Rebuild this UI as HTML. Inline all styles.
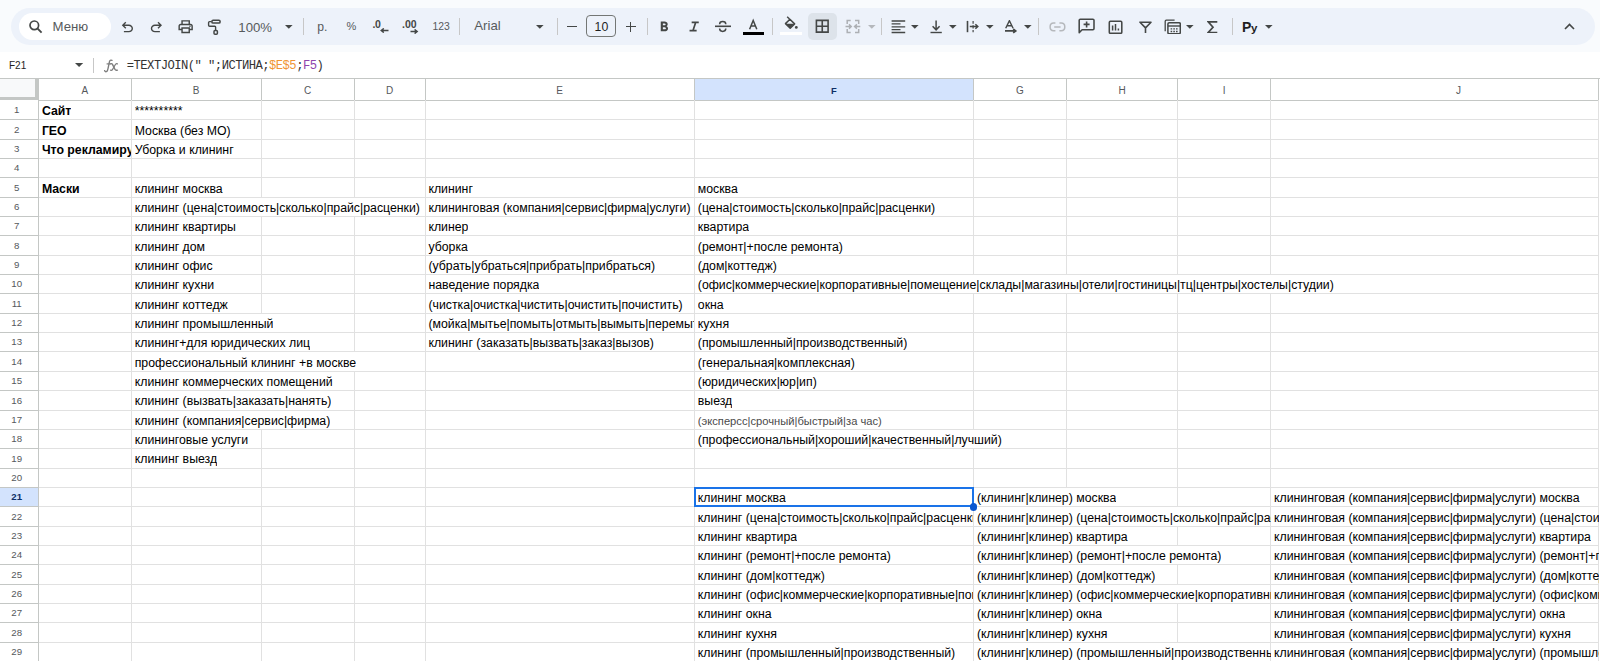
<!DOCTYPE html><html><head><meta charset="utf-8"><style>
*{margin:0;padding:0;box-sizing:border-box}
html,body{width:1600px;height:661px;overflow:hidden;background:#f9fbfd;font-family:"Liberation Sans", sans-serif;position:relative}
.a{position:absolute}
.t{position:absolute;white-space:nowrap;overflow:hidden;color:#000;font-size:12.3px;line-height:15px;height:15px}
.ic{position:absolute;fill:none;stroke:#444746;stroke-width:1.6}
.tri{position:absolute;width:0;height:0;border-left:3.9px solid transparent;border-right:3.9px solid transparent;border-top:3.9px solid #444746}
.sep{position:absolute;width:1px;top:17.5px;height:17.5px;background:#c7c7c7}
</style></head><body>

<div class="a" style="left:0;top:52px;width:1600px;height:609px;background:#fff"></div>
<div class="a" style="left:694.4px;top:78.4px;width:279.1px;height:22.0px;background:#d3e3fd"></div>
<div class="a" style="left:0;top:487.4px;width:38.5px;height:19.35px;background:#d3e3fd"></div>
<div class="a" style="left:0;top:78.4px;width:35px;height:19px;background:#f8f9fa"></div>
<div class="a" style="left:35px;top:78.4px;width:3.5px;height:22.0px;background:#c4c7c5"></div>
<div class="a" style="left:0;top:97px;width:38.5px;height:3.4px;background:#c4c7c5"></div>
<div class="a" style="left:0;top:77.9px;width:1600px;height:1px;background:#c4c7c5"></div>
<div class="a" style="left:38.5px;top:99.9px;width:1560.25px;height:1px;background:#c4c7c5"></div>
<div class="a" style="left:38.5px;top:119.25px;width:1560.25px;height:1px;background:#e1e1e1"></div>
<div class="a" style="left:0;top:119.25px;width:38.5px;height:1px;background:#c4c7c5"></div>
<div class="a" style="left:38.5px;top:138.60000000000002px;width:1560.25px;height:1px;background:#e1e1e1"></div>
<div class="a" style="left:0;top:138.60000000000002px;width:38.5px;height:1px;background:#c4c7c5"></div>
<div class="a" style="left:38.5px;top:157.95000000000002px;width:1560.25px;height:1px;background:#e1e1e1"></div>
<div class="a" style="left:0;top:157.95000000000002px;width:38.5px;height:1px;background:#c4c7c5"></div>
<div class="a" style="left:38.5px;top:177.3px;width:1560.25px;height:1px;background:#e1e1e1"></div>
<div class="a" style="left:0;top:177.3px;width:38.5px;height:1px;background:#c4c7c5"></div>
<div class="a" style="left:38.5px;top:196.65px;width:1560.25px;height:1px;background:#e1e1e1"></div>
<div class="a" style="left:0;top:196.65px;width:38.5px;height:1px;background:#c4c7c5"></div>
<div class="a" style="left:38.5px;top:216.0px;width:1560.25px;height:1px;background:#e1e1e1"></div>
<div class="a" style="left:0;top:216.0px;width:38.5px;height:1px;background:#c4c7c5"></div>
<div class="a" style="left:38.5px;top:235.35000000000002px;width:1560.25px;height:1px;background:#e1e1e1"></div>
<div class="a" style="left:0;top:235.35000000000002px;width:38.5px;height:1px;background:#c4c7c5"></div>
<div class="a" style="left:38.5px;top:254.70000000000002px;width:1560.25px;height:1px;background:#e1e1e1"></div>
<div class="a" style="left:0;top:254.70000000000002px;width:38.5px;height:1px;background:#c4c7c5"></div>
<div class="a" style="left:38.5px;top:274.05px;width:1560.25px;height:1px;background:#e1e1e1"></div>
<div class="a" style="left:0;top:274.05px;width:38.5px;height:1px;background:#c4c7c5"></div>
<div class="a" style="left:38.5px;top:293.4px;width:1560.25px;height:1px;background:#e1e1e1"></div>
<div class="a" style="left:0;top:293.4px;width:38.5px;height:1px;background:#c4c7c5"></div>
<div class="a" style="left:38.5px;top:312.75px;width:1560.25px;height:1px;background:#e1e1e1"></div>
<div class="a" style="left:0;top:312.75px;width:38.5px;height:1px;background:#c4c7c5"></div>
<div class="a" style="left:38.5px;top:332.1px;width:1560.25px;height:1px;background:#e1e1e1"></div>
<div class="a" style="left:0;top:332.1px;width:38.5px;height:1px;background:#c4c7c5"></div>
<div class="a" style="left:38.5px;top:351.45000000000005px;width:1560.25px;height:1px;background:#e1e1e1"></div>
<div class="a" style="left:0;top:351.45000000000005px;width:38.5px;height:1px;background:#c4c7c5"></div>
<div class="a" style="left:38.5px;top:370.80000000000007px;width:1560.25px;height:1px;background:#e1e1e1"></div>
<div class="a" style="left:0;top:370.80000000000007px;width:38.5px;height:1px;background:#c4c7c5"></div>
<div class="a" style="left:38.5px;top:390.15px;width:1560.25px;height:1px;background:#e1e1e1"></div>
<div class="a" style="left:0;top:390.15px;width:38.5px;height:1px;background:#c4c7c5"></div>
<div class="a" style="left:38.5px;top:409.5px;width:1560.25px;height:1px;background:#e1e1e1"></div>
<div class="a" style="left:0;top:409.5px;width:38.5px;height:1px;background:#c4c7c5"></div>
<div class="a" style="left:38.5px;top:428.85px;width:1560.25px;height:1px;background:#e1e1e1"></div>
<div class="a" style="left:0;top:428.85px;width:38.5px;height:1px;background:#c4c7c5"></div>
<div class="a" style="left:38.5px;top:448.20000000000005px;width:1560.25px;height:1px;background:#e1e1e1"></div>
<div class="a" style="left:0;top:448.20000000000005px;width:38.5px;height:1px;background:#c4c7c5"></div>
<div class="a" style="left:38.5px;top:467.55000000000007px;width:1560.25px;height:1px;background:#e1e1e1"></div>
<div class="a" style="left:0;top:467.55000000000007px;width:38.5px;height:1px;background:#c4c7c5"></div>
<div class="a" style="left:38.5px;top:486.9px;width:1560.25px;height:1px;background:#e1e1e1"></div>
<div class="a" style="left:0;top:486.9px;width:38.5px;height:1px;background:#c4c7c5"></div>
<div class="a" style="left:38.5px;top:506.25px;width:1560.25px;height:1px;background:#e1e1e1"></div>
<div class="a" style="left:0;top:506.25px;width:38.5px;height:1px;background:#c4c7c5"></div>
<div class="a" style="left:38.5px;top:525.6px;width:1560.25px;height:1px;background:#e1e1e1"></div>
<div class="a" style="left:0;top:525.6px;width:38.5px;height:1px;background:#c4c7c5"></div>
<div class="a" style="left:38.5px;top:544.95px;width:1560.25px;height:1px;background:#e1e1e1"></div>
<div class="a" style="left:0;top:544.95px;width:38.5px;height:1px;background:#c4c7c5"></div>
<div class="a" style="left:38.5px;top:564.3000000000001px;width:1560.25px;height:1px;background:#e1e1e1"></div>
<div class="a" style="left:0;top:564.3000000000001px;width:38.5px;height:1px;background:#c4c7c5"></div>
<div class="a" style="left:38.5px;top:583.6500000000001px;width:1560.25px;height:1px;background:#e1e1e1"></div>
<div class="a" style="left:0;top:583.6500000000001px;width:38.5px;height:1px;background:#c4c7c5"></div>
<div class="a" style="left:38.5px;top:603.0px;width:1560.25px;height:1px;background:#e1e1e1"></div>
<div class="a" style="left:0;top:603.0px;width:38.5px;height:1px;background:#c4c7c5"></div>
<div class="a" style="left:38.5px;top:622.35px;width:1560.25px;height:1px;background:#e1e1e1"></div>
<div class="a" style="left:0;top:622.35px;width:38.5px;height:1px;background:#c4c7c5"></div>
<div class="a" style="left:38.5px;top:641.7px;width:1560.25px;height:1px;background:#e1e1e1"></div>
<div class="a" style="left:0;top:641.7px;width:38.5px;height:1px;background:#c4c7c5"></div>
<div class="a" style="left:38.5px;top:661.0500000000001px;width:1560.25px;height:1px;background:#e1e1e1"></div>
<div class="a" style="left:0;top:661.0500000000001px;width:38.5px;height:1px;background:#c4c7c5"></div>
<div class="a" style="left:38.0px;top:100.4px;width:1px;height:561.1500000000001px;background:#c4c7c5"></div>
<div class="a" style="left:130.8px;top:78.4px;width:1px;height:22.0px;background:#c4c7c5"></div>
<div class="a" style="left:130.8px;top:100.4px;width:1px;height:561.1500000000001px;background:#e1e1e1"></div>
<div class="a" style="left:260.5px;top:78.4px;width:1px;height:22.0px;background:#c4c7c5"></div>
<div class="a" style="left:260.5px;top:100.4px;width:1px;height:96.75px;background:#e1e1e1"></div>
<div class="a" style="left:260.5px;top:216.5px;width:1px;height:96.75px;background:#e1e1e1"></div>
<div class="a" style="left:260.5px;top:429.35px;width:1px;height:232.20000000000005px;background:#e1e1e1"></div>
<div class="a" style="left:353.9px;top:78.4px;width:1px;height:22.0px;background:#c4c7c5"></div>
<div class="a" style="left:353.9px;top:100.4px;width:1px;height:96.75px;background:#e1e1e1"></div>
<div class="a" style="left:353.9px;top:216.5px;width:1px;height:135.45000000000005px;background:#e1e1e1"></div>
<div class="a" style="left:353.9px;top:371.30000000000007px;width:1px;height:290.25px;background:#e1e1e1"></div>
<div class="a" style="left:424.5px;top:78.4px;width:1px;height:22.0px;background:#c4c7c5"></div>
<div class="a" style="left:424.5px;top:100.4px;width:1px;height:561.1500000000001px;background:#e1e1e1"></div>
<div class="a" style="left:693.9px;top:78.4px;width:1px;height:22.0px;background:#c4c7c5"></div>
<div class="a" style="left:693.9px;top:100.4px;width:1px;height:561.1500000000001px;background:#e1e1e1"></div>
<div class="a" style="left:973.0px;top:78.4px;width:1px;height:22.0px;background:#c4c7c5"></div>
<div class="a" style="left:973.0px;top:100.4px;width:1px;height:174.15px;background:#e1e1e1"></div>
<div class="a" style="left:973.0px;top:293.9px;width:1px;height:135.45000000000005px;background:#e1e1e1"></div>
<div class="a" style="left:973.0px;top:448.70000000000005px;width:1px;height:212.85000000000002px;background:#e1e1e1"></div>
<div class="a" style="left:1066.0px;top:78.4px;width:1px;height:22.0px;background:#c4c7c5"></div>
<div class="a" style="left:1066.0px;top:100.4px;width:1px;height:174.15px;background:#e1e1e1"></div>
<div class="a" style="left:1066.0px;top:293.9px;width:1px;height:193.5px;background:#e1e1e1"></div>
<div class="a" style="left:1177.0px;top:78.4px;width:1px;height:22.0px;background:#c4c7c5"></div>
<div class="a" style="left:1177.0px;top:100.4px;width:1px;height:174.15px;background:#e1e1e1"></div>
<div class="a" style="left:1177.0px;top:293.9px;width:1px;height:212.85000000000002px;background:#e1e1e1"></div>
<div class="a" style="left:1177.0px;top:526.1px;width:1px;height:19.350000000000023px;background:#e1e1e1"></div>
<div class="a" style="left:1177.0px;top:564.8000000000001px;width:1px;height:19.350000000000023px;background:#e1e1e1"></div>
<div class="a" style="left:1177.0px;top:603.5px;width:1px;height:38.700000000000045px;background:#e1e1e1"></div>
<div class="a" style="left:1270.1px;top:78.4px;width:1px;height:22.0px;background:#c4c7c5"></div>
<div class="a" style="left:1270.1px;top:100.4px;width:1px;height:174.15px;background:#e1e1e1"></div>
<div class="a" style="left:1270.1px;top:293.9px;width:1px;height:367.6500000000001px;background:#e1e1e1"></div>
<div class="a" style="left:1598.25px;top:78.4px;width:1px;height:22.0px;background:#c4c7c5"></div>
<div class="a" style="left:1598.25px;top:100.4px;width:1px;height:561.1500000000001px;background:#e1e1e1"></div>
<div class="a" style="left:64.9px;top:83.80000000000001px;width:40px;text-align:center;font-size:10px;line-height:14px;color:#55585c;font-weight:normal">A</div>
<div class="a" style="left:176.15px;top:83.80000000000001px;width:40px;text-align:center;font-size:10px;line-height:14px;color:#55585c;font-weight:normal">B</div>
<div class="a" style="left:287.7px;top:83.80000000000001px;width:40px;text-align:center;font-size:10px;line-height:14px;color:#55585c;font-weight:normal">C</div>
<div class="a" style="left:369.7px;top:83.80000000000001px;width:40px;text-align:center;font-size:10px;line-height:14px;color:#55585c;font-weight:normal">D</div>
<div class="a" style="left:539.7px;top:83.80000000000001px;width:40px;text-align:center;font-size:10px;line-height:14px;color:#55585c;font-weight:normal">E</div>
<div class="a" style="left:813.95px;top:84.30000000000001px;width:40px;text-align:center;font-size:9.4px;line-height:14px;color:#0e2e66;font-weight:bold">F</div>
<div class="a" style="left:1000.0px;top:83.80000000000001px;width:40px;text-align:center;font-size:10px;line-height:14px;color:#55585c;font-weight:normal">G</div>
<div class="a" style="left:1102.0px;top:83.80000000000001px;width:40px;text-align:center;font-size:10px;line-height:14px;color:#55585c;font-weight:normal">H</div>
<div class="a" style="left:1204.05px;top:83.80000000000001px;width:40px;text-align:center;font-size:10px;line-height:14px;color:#55585c;font-weight:normal">I</div>
<div class="a" style="left:1438.5px;top:83.80000000000001px;width:40px;text-align:center;font-size:10px;line-height:14px;color:#55585c;font-weight:normal">J</div>
<div class="a" style="left:-2.6px;top:103.275px;width:38.5px;text-align:center;font-size:9.7px;line-height:14px;color:#55585c;font-weight:normal">1</div>
<div class="a" style="left:-2.6px;top:122.62500000000001px;width:38.5px;text-align:center;font-size:9.7px;line-height:14px;color:#55585c;font-weight:normal">2</div>
<div class="a" style="left:-2.6px;top:141.97500000000002px;width:38.5px;text-align:center;font-size:9.7px;line-height:14px;color:#55585c;font-weight:normal">3</div>
<div class="a" style="left:-2.6px;top:161.325px;width:38.5px;text-align:center;font-size:9.7px;line-height:14px;color:#55585c;font-weight:normal">4</div>
<div class="a" style="left:-2.6px;top:180.675px;width:38.5px;text-align:center;font-size:9.7px;line-height:14px;color:#55585c;font-weight:normal">5</div>
<div class="a" style="left:-2.6px;top:200.02499999999998px;width:38.5px;text-align:center;font-size:9.7px;line-height:14px;color:#55585c;font-weight:normal">6</div>
<div class="a" style="left:-2.6px;top:219.375px;width:38.5px;text-align:center;font-size:9.7px;line-height:14px;color:#55585c;font-weight:normal">7</div>
<div class="a" style="left:-2.6px;top:238.72500000000002px;width:38.5px;text-align:center;font-size:9.7px;line-height:14px;color:#55585c;font-weight:normal">8</div>
<div class="a" style="left:-2.6px;top:258.075px;width:38.5px;text-align:center;font-size:9.7px;line-height:14px;color:#55585c;font-weight:normal">9</div>
<div class="a" style="left:-2.6px;top:277.425px;width:38.5px;text-align:center;font-size:9.7px;line-height:14px;color:#55585c;font-weight:normal">10</div>
<div class="a" style="left:-2.6px;top:296.775px;width:38.5px;text-align:center;font-size:9.7px;line-height:14px;color:#55585c;font-weight:normal">11</div>
<div class="a" style="left:-2.6px;top:316.125px;width:38.5px;text-align:center;font-size:9.7px;line-height:14px;color:#55585c;font-weight:normal">12</div>
<div class="a" style="left:-2.6px;top:335.475px;width:38.5px;text-align:center;font-size:9.7px;line-height:14px;color:#55585c;font-weight:normal">13</div>
<div class="a" style="left:-2.6px;top:354.82500000000005px;width:38.5px;text-align:center;font-size:9.7px;line-height:14px;color:#55585c;font-weight:normal">14</div>
<div class="a" style="left:-2.6px;top:374.175px;width:38.5px;text-align:center;font-size:9.7px;line-height:14px;color:#55585c;font-weight:normal">15</div>
<div class="a" style="left:-2.6px;top:393.525px;width:38.5px;text-align:center;font-size:9.7px;line-height:14px;color:#55585c;font-weight:normal">16</div>
<div class="a" style="left:-2.6px;top:412.875px;width:38.5px;text-align:center;font-size:9.7px;line-height:14px;color:#55585c;font-weight:normal">17</div>
<div class="a" style="left:-2.6px;top:432.225px;width:38.5px;text-align:center;font-size:9.7px;line-height:14px;color:#55585c;font-weight:normal">18</div>
<div class="a" style="left:-2.6px;top:451.57500000000005px;width:38.5px;text-align:center;font-size:9.7px;line-height:14px;color:#55585c;font-weight:normal">19</div>
<div class="a" style="left:-2.6px;top:470.925px;width:38.5px;text-align:center;font-size:9.7px;line-height:14px;color:#55585c;font-weight:normal">20</div>
<div class="a" style="left:-2.6px;top:490.275px;width:38.5px;text-align:center;font-size:9.7px;line-height:14px;color:#0e2e66;font-weight:bold">21</div>
<div class="a" style="left:-2.6px;top:509.62499999999994px;width:38.5px;text-align:center;font-size:9.7px;line-height:14px;color:#55585c;font-weight:normal">22</div>
<div class="a" style="left:-2.6px;top:528.9750000000001px;width:38.5px;text-align:center;font-size:9.7px;line-height:14px;color:#55585c;font-weight:normal">23</div>
<div class="a" style="left:-2.6px;top:548.325px;width:38.5px;text-align:center;font-size:9.7px;line-height:14px;color:#55585c;font-weight:normal">24</div>
<div class="a" style="left:-2.6px;top:567.6750000000002px;width:38.5px;text-align:center;font-size:9.7px;line-height:14px;color:#55585c;font-weight:normal">25</div>
<div class="a" style="left:-2.6px;top:587.0250000000001px;width:38.5px;text-align:center;font-size:9.7px;line-height:14px;color:#55585c;font-weight:normal">26</div>
<div class="a" style="left:-2.6px;top:606.375px;width:38.5px;text-align:center;font-size:9.7px;line-height:14px;color:#55585c;font-weight:normal">27</div>
<div class="a" style="left:-2.6px;top:625.7250000000001px;width:38.5px;text-align:center;font-size:9.7px;line-height:14px;color:#55585c;font-weight:normal">28</div>
<div class="a" style="left:-2.6px;top:645.075px;width:38.5px;text-align:center;font-size:9.7px;line-height:14px;color:#55585c;font-weight:normal">29</div>
<div class="t" style="left:41.90px;top:104.15px;width:29.45px;font-weight:bold;">Сайт</div>
<div class="t" style="left:134.70px;top:104.15px;width:47.86px;">**********</div>
<div class="t" style="left:41.90px;top:123.50px;width:24.75px;font-weight:bold;">ГЕО</div>
<div class="t" style="left:134.70px;top:123.50px;width:95.94px;">Москва (без МО)</div>
<div class="t" style="left:41.90px;top:142.85px;width:89.40px;font-weight:bold;">Что рекламируем</div>
<div class="t" style="left:134.70px;top:142.85px;width:98.95px;">Уборка и клининг</div>
<div class="t" style="left:41.90px;top:181.55px;width:37.80px;font-weight:bold;">Маски</div>
<div class="t" style="left:134.70px;top:181.55px;width:87.98px;">клининг москва</div>
<div class="t" style="left:428.40px;top:181.55px;width:44.50px;">клининг</div>
<div class="t" style="left:697.80px;top:181.55px;width:40.06px;">москва</div>
<div class="t" style="left:134.70px;top:200.90px;width:285.23px;">клининг (цена|стоимость|сколько|прайс|расценки)</div>
<div class="t" style="left:428.40px;top:200.90px;width:262.11px;">клининговая (компания|сервис|фирма|услуги)</div>
<div class="t" style="left:697.80px;top:200.90px;width:237.31px;">(цена|стоимость|сколько|прайс|расценки)</div>
<div class="t" style="left:134.70px;top:220.25px;width:101.28px;">клининг квартиры</div>
<div class="t" style="left:428.40px;top:220.25px;width:40.03px;">клинер</div>
<div class="t" style="left:697.80px;top:220.25px;width:51.38px;">квартира</div>
<div class="t" style="left:134.70px;top:239.60px;width:70.39px;">клининг дом</div>
<div class="t" style="left:428.40px;top:239.60px;width:39.50px;">уборка</div>
<div class="t" style="left:697.80px;top:239.60px;width:145.14px;">(ремонт|+после ремонта)</div>
<div class="t" style="left:134.70px;top:258.95px;width:77.89px;">клининг офис</div>
<div class="t" style="left:428.40px;top:258.95px;width:226.66px;">(убрать|убраться|прибрать|прибраться)</div>
<div class="t" style="left:697.80px;top:258.95px;width:79.05px;">(дом|коттедж)</div>
<div class="t" style="left:134.70px;top:278.30px;width:79.39px;">клининг кухни</div>
<div class="t" style="left:428.40px;top:278.30px;width:111.05px;">наведение порядка</div>
<div class="t" style="left:697.80px;top:278.30px;width:636.02px;">(офис|коммерческие|корпоративные|помещение|склады|магазины|отели|гостиницы|тц|центры|хостелы|студии)</div>
<div class="t" style="left:134.70px;top:297.65px;width:93.11px;">клининг коттедж</div>
<div class="t" style="left:428.40px;top:297.65px;width:254.33px;">(чистка|очистка|чистить|очистить|почистить)</div>
<div class="t" style="left:697.80px;top:297.65px;width:25.86px;">окна</div>
<div class="t" style="left:134.70px;top:317.00px;width:138.72px;">клининг промышленный</div>
<div class="t" style="left:428.40px;top:317.00px;width:266.00px;">(мойка|мытье|помыть|отмыть|вымыть|перемыть)</div>
<div class="t" style="left:697.80px;top:317.00px;width:31.27px;">кухня</div>
<div class="t" style="left:134.70px;top:336.35px;width:175.38px;">клининг+для юридических лиц</div>
<div class="t" style="left:428.40px;top:336.35px;width:225.48px;">клининг (заказать|вызвать|заказ|вызов)</div>
<div class="t" style="left:697.80px;top:336.35px;width:209.47px;">(промышленный|производственный)</div>
<div class="t" style="left:134.70px;top:355.70px;width:221.53px;">профессиональный клининг +в москве</div>
<div class="t" style="left:697.80px;top:355.70px;width:157.06px;">(генеральная|комплексная)</div>
<div class="t" style="left:134.70px;top:375.05px;width:197.94px;">клининг коммерческих помещений</div>
<div class="t" style="left:697.80px;top:375.05px;width:118.94px;">(юридических|юр|ип)</div>
<div class="t" style="left:134.70px;top:394.40px;width:196.70px;">клининг (вызвать|заказать|нанять)</div>
<div class="t" style="left:697.80px;top:394.40px;width:34.48px;">выезд</div>
<div class="t" style="left:134.70px;top:413.75px;width:195.63px;">клининг (компания|сервис|фирма)</div>
<div class="t" style="left:697.80px;top:413.75px;width:184.06px;font-size:11.2px;color:#4a4a4a;">(эксперсс|срочный|быстрый|за час)</div>
<div class="t" style="left:134.70px;top:433.10px;width:113.53px;">клининговые услуги</div>
<div class="t" style="left:697.80px;top:433.10px;width:304.02px;">(профессиональный|хороший|качественный|лучший)</div>
<div class="t" style="left:134.70px;top:452.45px;width:82.41px;">клининг выезд</div>
<div class="t" style="left:697.80px;top:491.15px;width:87.98px;">клининг москва</div>
<div class="t" style="left:976.90px;top:491.15px;width:139.39px;">(клининг|клинер) москва</div>
<div class="t" style="left:1274.00px;top:491.15px;width:305.59px;">клининговая (компания|сервис|фирма|услуги) москва</div>
<div class="t" style="left:697.80px;top:510.50px;width:275.70px;">клининг (цена|стоимость|сколько|прайс|расценки)</div>
<div class="t" style="left:976.90px;top:510.50px;width:293.70px;">(клининг|клинер) (цена|стоимость|сколько|прайс|расценки)</div>
<div class="t" style="left:1274.00px;top:510.50px;width:324.75px;">клининговая (компания|сервис|фирма|услуги) (цена|стоимость|сколько|прайс|расценки)</div>
<div class="t" style="left:697.80px;top:529.85px;width:99.28px;">клининг квартира</div>
<div class="t" style="left:976.90px;top:529.85px;width:150.70px;">(клининг|клинер) квартира</div>
<div class="t" style="left:1274.00px;top:529.85px;width:316.89px;">клининговая (компания|сервис|фирма|услуги) квартира</div>
<div class="t" style="left:697.80px;top:549.20px;width:193.05px;">клининг (ремонт|+после ремонта)</div>
<div class="t" style="left:976.90px;top:549.20px;width:244.47px;">(клининг|клинер) (ремонт|+после ремонта)</div>
<div class="t" style="left:1274.00px;top:549.20px;width:324.75px;">клининговая (компания|сервис|фирма|услуги) (ремонт|+после ремонта)</div>
<div class="t" style="left:697.80px;top:568.55px;width:126.95px;">клининг (дом|коттедж)</div>
<div class="t" style="left:976.90px;top:568.55px;width:178.38px;">(клининг|клинер) (дом|коттедж)</div>
<div class="t" style="left:1274.00px;top:568.55px;width:324.75px;">клининговая (компания|сервис|фирма|услуги) (дом|коттедж)</div>
<div class="t" style="left:697.80px;top:587.90px;width:275.70px;">клининг (офис|коммерческие|корпоративные|помещение|склады|магазины|отели|гостиницы|тц|центры|хостелы|студии)</div>
<div class="t" style="left:976.90px;top:587.90px;width:293.70px;">(клининг|клинер) (офис|коммерческие|корпоративные|помещение|склады|магазины|отели|гостиницы|тц|центры|хостелы|студии)</div>
<div class="t" style="left:1274.00px;top:587.90px;width:324.75px;">клининговая (компания|сервис|фирма|услуги) (офис|коммерческие|корпоративные|помещение|склады|магазины|отели|гостиницы|тц|центры|хостелы|студии)</div>
<div class="t" style="left:697.80px;top:607.25px;width:73.77px;">клининг окна</div>
<div class="t" style="left:976.90px;top:607.25px;width:125.19px;">(клининг|клинер) окна</div>
<div class="t" style="left:1274.00px;top:607.25px;width:291.38px;">клининговая (компания|сервис|фирма|услуги) окна</div>
<div class="t" style="left:697.80px;top:626.60px;width:79.19px;">клининг кухня</div>
<div class="t" style="left:976.90px;top:626.60px;width:130.61px;">(клининг|клинер) кухня</div>
<div class="t" style="left:1274.00px;top:626.60px;width:296.80px;">клининговая (компания|сервис|фирма|услуги) кухня</div>
<div class="t" style="left:697.80px;top:645.95px;width:257.39px;">клининг (промышленный|производственный)</div>
<div class="t" style="left:976.90px;top:645.95px;width:293.70px;">(клининг|клинер) (промышленный|производственный)</div>
<div class="t" style="left:1274.00px;top:645.95px;width:324.75px;">клининговая (компания|сервис|фирма|услуги) (промышленный|производственный)</div>
<div class="a" style="left:693.8px;top:486.79999999999995px;width:280.3px;height:20.550000000000022px;border:2px solid #1a73e8"></div>
<div class="a" style="left:969.7px;top:503.45px;width:7.6px;height:7.6px;border-radius:50%;background:#0b57d0"></div>
<!-- toolbar pill -->
<div class="a" style="left:11px;top:7.5px;width:1584px;height:37px;border-radius:18.5px;background:#edf2fa"></div>
<div class="a" style="left:18.5px;top:13px;width:92px;height:26.5px;border-radius:13.25px;background:#fff"></div>
<!-- search -->
<svg class="a" style="left:27px;top:19px" width="16" height="15" viewBox="0 0 16 15"><circle cx="7.3" cy="6.3" r="4.3" fill="none" stroke="#444746" stroke-width="1.7"/><path d="M10.4 9.4 L14.6 13.6" stroke="#444746" stroke-width="1.9" fill="none"/></svg>
<div class="a" style="left:52.5px;top:18.8px;font-size:13.2px;line-height:16px;color:#575a5c">Меню</div>
<!-- undo -->
<svg class="a" style="left:118.6px;top:18.8px" width="16.8" height="16.8" viewBox="0 -960 960 960"><path fill="#444746" d="M280-200v-80h284q63 0 109.5-40T720-420q0-60-46.5-100T564-560H312l104 104-56 56-200-200 200-200 56 56-104 104h252q97 0 166.5 63T800-420q0 94-69.5 157T564-200H280Z"/></svg>
<svg class="a" style="left:148px;top:18.8px" width="16.8" height="16.8" viewBox="0 -960 960 960"><path fill="#444746" d="M396-200q-97 0-166.5-63T160-420q0-94 69.5-157T396-640h252L544-744l56-56 200 200-200 200-56-56 104-104H396q-63 0-109.5 40T240-420q0 60 46.5 100T396-280h284v80H396Z"/></svg>
<!-- print -->
<svg class="a" style="left:176.6px;top:18px" width="17.3" height="17.3" viewBox="0 -960 960 960"><path fill="#444746" d="M640-640v-120H320v120h-80v-200h480v200h-80Zm-480 80h640-640Zm560 100q17 0 28.5-11.5T760-500q0-17-11.5-28.5T720-540q-17 0-28.5 11.5T680-500q0 17 11.5 28.5T720-460Zm-80 260v-160H320v160h320Zm80 80H240v-160H80v-240q0-51 35-85.5t85-34.5h560q51 0 85.5 34.5T880-520v240H720v160Zm80-240v-160q0-17-11.5-28.5T760-560H200q-17 0-28.5 11.5T160-520v160h80v-80h480v80h80Z"/></svg>
<!-- paint format -->
<svg class="a" style="left:200px;top:14px" width="30" height="26" viewBox="0 0 30 26"><rect x="11.9" y="6.2" width="8.2" height="2.9" rx="1.2" fill="none" stroke="#444746" stroke-width="1.5"/><path d="M11.6 7.6H9.6Q8.6 7.6 8.6 8.6V11.2Q8.6 12.2 9.6 12.2H14.7Q15.6 12.2 15.6 13.1V16.2" fill="none" stroke="#444746" stroke-width="1.4"/><rect x="14" y="16.5" width="3.4" height="3.7" rx="1" fill="none" stroke="#444746" stroke-width="1.5"/></svg>
<!-- 100% -->
<div class="a" style="left:238.3px;top:19.5px;font-size:13.2px;line-height:16px;color:#575a5c">100%</div>
<svg class="a" style="left:284.6px;top:24.6px;overflow:visible" width="7.6" height="3.8"><path d="M0 0H7.6L3.8 3.8Z" fill="#444746"/></svg>
<div class="sep" style="left:303.3px"></div>
<div class="a" style="left:317.2px;top:18.8px;font-size:12.2px;line-height:16px;color:#575a5c">р.</div>
<div class="a" style="left:346.6px;top:19.5px;font-size:11px;line-height:13px;color:#575a5c">%</div>
<!-- decimals -->
<div class="a" style="left:372.5px;top:17.5px;font-size:10.5px;line-height:12px;color:#444746;font-weight:bold;letter-spacing:-0.3px">.0</div>
<svg class="a" style="left:380px;top:28px" width="9" height="5" viewBox="0 0 9 5"><path d="M8.5 2.5H1.5M3.8 0.4L1.2 2.5L3.8 4.6" fill="none" stroke="#444746" stroke-width="1.4"/></svg>
<div class="a" style="left:402px;top:17.5px;font-size:10.5px;line-height:12px;color:#444746;font-weight:bold;letter-spacing:0px">.00</div>
<svg class="a" style="left:409.5px;top:29px" width="9" height="5" viewBox="0 0 9 5"><path d="M0.5 2.5H6.8M4.6 0.4L7.2 2.5L4.6 4.6" fill="none" stroke="#444746" stroke-width="1.4"/></svg>
<div class="a" style="left:432.5px;top:19.8px;font-size:10.4px;line-height:13px;color:#575a5c">123</div>
<div class="sep" style="left:459px"></div>
<div class="a" style="left:474.3px;top:18.2px;font-size:13.2px;line-height:16px;color:#575a5c">Arial</div>
<svg class="a" style="left:535.5px;top:24.5px;overflow:visible" width="7.6" height="3.8"><path d="M0 0H7.6L3.8 3.8Z" fill="#444746"/></svg>
<div class="sep" style="left:556.5px"></div>
<div class="a" style="left:567px;top:25.5px;width:10px;height:1.6px;background:#444746"></div>
<div class="a" style="left:586.3px;top:15.3px;width:30.2px;height:21.6px;border:1px solid #747775;border-radius:4px"></div>
<div class="a" style="left:586.3px;top:18.8px;width:30.2px;text-align:center;font-size:12.3px;line-height:16px;color:#1f1f1f">10</div>
<div class="a" style="left:625.6px;top:25.8px;width:10px;height:1.6px;background:#444746"></div>
<div class="a" style="left:629.8px;top:21.6px;width:1.6px;height:10px;background:#444746"></div>
<div class="sep" style="left:646.5px"></div>
<!-- B I S -->
<svg class="a" style="left:655.8px;top:17.5px;overflow:visible" width="16.8" height="16.8" viewBox="0 -960 960 960"><g><path fill="#444746" d="M272-200v-560h221q65 0 120 40t55 111q0 51-23 78.5T602-491q25 11 55.5 41t30.5 90q0 89-65 124.5T501-200H272Zm121-112h104q48 0 58.5-24.5T566-372q0-11-10.5-35.5T494-432H393v120Zm0-228h93q33 0 48-17t15-38q0-24-17-39t-44-15h-95v109Z"/></g></svg>
<svg class="a" style="left:685.6px;top:17.5px;overflow:visible" width="17" height="17" viewBox="0 -960 960 960"><g><path fill="#444746" d="M200-200v-100h160l120-360H320v-100h400v100H580L460-300h140v100H200Z"/></g></svg>
<svg class="a" style="left:714px;top:20px" width="18" height="13" viewBox="0 0 18 13"><path d="M1 6.3H17" stroke="#444746" stroke-width="1.6"/><path d="M5.6 4.2Q5.6 1.6 8.7 1.6Q11.8 1.6 11.8 4.2" fill="none" stroke="#444746" stroke-width="1.5"/><path d="M5.6 8.6Q5.6 11.4 8.7 11.4Q11.8 11.4 11.8 8.6" fill="none" stroke="#444746" stroke-width="1.5"/></svg>
<!-- text color -->
<svg class="a" style="left:747px;top:17.5px" width="13" height="12" viewBox="0 0 13 12"><path d="M2.6 11.3L6.2 2.4L9.8 11.3M3.9 8H8.5" fill="none" stroke="#444746" stroke-width="1.5"/></svg>
<div class="a" style="left:743px;top:32.3px;width:21px;height:3px;background:#000"></div>
<div class="sep" style="left:771.8px"></div>
<!-- fill color bucket -->
<svg class="a" style="left:783px;top:15.5px" width="16" height="14" viewBox="0 0 16 14"><path d="M4.2 0.8L6.5 3.1" stroke="#444746" stroke-width="1.4"/><path d="M6.9 3.2L11.6 7.9L7.2 12.3L2.5 7.6Z" fill="none" stroke="#444746" stroke-width="1.5" stroke-linejoin="round"/><path d="M2.7 7.8L11.3 7.8L7.2 12Z" fill="#444746"/><circle cx="13.3" cy="11.4" r="1.4" fill="#444746"/></svg>
<div class="a" style="left:780px;top:32.3px;width:22px;height:2.8px;background:#fff"></div>
<!-- borders active -->
<div class="a" style="left:808px;top:12.5px;width:29px;height:27.5px;border-radius:5px;background:#dde3ea"></div>
<svg class="a" style="left:815px;top:19.1px" width="14.5" height="14.5" viewBox="0 0 14.5 14.5"><path d="M1.4 1.4H13.1V13.1H1.4ZM7.25 1.4V13.1M1.4 7.25H13.1" fill="none" stroke="#444746" stroke-width="1.6"/></svg>
<!-- merge disabled -->
<svg class="a" style="left:840px;top:16px" width="40" height="22" viewBox="0 0 40 22"><path d="M10.7 4.6H7.2V8M7.2 13V16.4H10.7M5.5 10.5H11M9 8.4L11.2 10.5L9 12.6M15 4.6H18.7V8M18.7 13V16.4H15M20.3 10.5H14.8M16.9 8.4L14.6 10.5L16.9 12.6" fill="none" stroke="#adb0b4" stroke-width="1.5"/></svg>
<svg class="a" style="left:868px;top:24.6px;overflow:visible" width="7.6" height="3.8"><path d="M0 0H7.6L3.8 3.8Z" fill="#b5b8bc"/></svg>
<div class="sep" style="left:880.8px"></div>
<!-- align left -->
<svg class="a" style="left:890.5px;top:20px" width="15" height="14" viewBox="0 0 15 14"><path d="M0.6 1H14.2M0.6 3.9H9.5M0.6 6.8H14.2M0.6 9.6H9.5M0.6 12.5H14.2" stroke="#444746" stroke-width="1.35"/></svg>
<svg class="a" style="left:910.6px;top:24.6px;overflow:visible" width="7.6" height="3.8"><path d="M0 0H7.6L3.8 3.8Z" fill="#444746"/></svg>
<!-- valign -->
<svg class="a" style="left:929.5px;top:20px" width="12.5" height="14" viewBox="0 0 12.5 14"><path d="M6.1 0.4V9.6M2.6 6.2L6.1 9.8L9.6 6.2" fill="none" stroke="#444746" stroke-width="1.5"/><path d="M0.5 12.5H11.8" stroke="#444746" stroke-width="1.4"/></svg>
<svg class="a" style="left:948.5px;top:24.6px;overflow:visible" width="7.6" height="3.8"><path d="M0 0H7.6L3.8 3.8Z" fill="#444746"/></svg>
<!-- wrap -->
<svg class="a" style="left:966px;top:20px" width="13" height="13" viewBox="0 0 13 13"><path d="M1.5 0.9V12.2" stroke="#444746" stroke-width="1.6"/><path d="M7.1 0.9V3.8M7.1 5.2V8.6M7.1 10V12.2" stroke="#444746" stroke-width="1.2"/><path d="M3.8 6.5H11.6M9.4 4.3L11.8 6.5L9.4 8.7" fill="none" stroke="#444746" stroke-width="1.5"/></svg>
<svg class="a" style="left:986px;top:24.6px;overflow:visible" width="7.6" height="3.8"><path d="M0 0H7.6L3.8 3.8Z" fill="#444746"/></svg>
<!-- rotate -->
<svg class="a" style="left:1004px;top:20px" width="14" height="14" viewBox="0 0 14 14"><path d="M1.7 8.2L5.4 0.7L9.1 8.2M2.9 5.8H7.9" fill="none" stroke="#444746" stroke-width="1.4"/><path d="M1 10.9H11.2M9.2 8.9L11.8 10.9L9.2 12.9" fill="none" stroke="#444746" stroke-width="1.6"/></svg>
<svg class="a" style="left:1023.5px;top:24.6px;overflow:visible" width="7.6" height="3.8"><path d="M0 0H7.6L3.8 3.8Z" fill="#444746"/></svg>
<div class="sep" style="left:1038.3px"></div>
<!-- link disabled -->
<svg class="a" style="left:1048.5px;top:21.5px" width="17" height="10" viewBox="0 0 17 10"><path d="M6.4 1.1H4.6Q1.1 1.1 1.1 4.9Q1.1 8.7 4.6 8.7H6.4M10.4 1.1H12.2Q15.8 1.1 15.8 4.9Q15.8 8.7 12.2 8.7H10.4M5.2 4.9H11.6" fill="none" stroke="#b5b8bc" stroke-width="1.5"/></svg>
<!-- comment -->
<svg class="a" style="left:1077.5px;top:18.2px" width="17" height="16" viewBox="0 0 17 16"><path d="M1.2 14.6V2.3Q1.2 1.2 2.3 1.2H14.9Q16 1.2 16 2.3V10.6Q16 11.7 14.9 11.7H4.1Z" fill="none" stroke="#444746" stroke-width="1.55" stroke-linejoin="round"/><path d="M8.6 3.4V9.4M5.6 6.4H11.6" stroke="#444746" stroke-width="1.6"/></svg>
<!-- chart -->
<svg class="a" style="left:1108px;top:19.5px" width="15" height="14.5" viewBox="0 0 15 14.5"><rect x="1.3" y="1.3" width="12.5" height="12" rx="1.1" fill="none" stroke="#444746" stroke-width="1.55"/><path d="M4.6 5.4V10.6M7.5 4V10.6M10.4 8.4V10.6" stroke="#444746" stroke-width="1.5"/></svg>
<!-- filter -->
<svg class="a" style="left:1138.5px;top:20.5px" width="13" height="12.5" viewBox="0 0 13 12.5"><path d="M1 1.2H12L6.5 6.9ZM6.5 6.5V12" fill="none" stroke="#444746" stroke-width="1.6" stroke-linejoin="round"/></svg>
<!-- functions table -->
<svg class="a" style="left:1163.5px;top:18.8px" width="17.5" height="15.5" viewBox="0 0 17.5 15.5"><path d="M1.2 12.2V2.2Q1.2 1.1 2.3 1.1H10.6" fill="none" stroke="#444746" stroke-width="1.3"/><rect x="3.9" y="3.7" width="12.4" height="11" rx="1.2" fill="none" stroke="#444746" stroke-width="1.5"/><path d="M4 7H16.2" stroke="#444746" stroke-width="1.4"/><path d="M6.6 9.2h1.6v1.4h-1.6zM9.3 9.2h1.6v1.4h-1.6zM12 9.2h1.6v1.4h-1.6zM6.6 11.8h1.6v1.4h-1.6zM9.3 11.8h1.6v1.4h-1.6zM12 11.8h1.6v1.4h-1.6z" fill="#444746"/></svg>
<svg class="a" style="left:1185.5px;top:24.6px;overflow:visible" width="7.6" height="3.8"><path d="M0 0H7.6L3.8 3.8Z" fill="#444746"/></svg>
<svg class="a" style="left:1206.5px;top:20.5px" width="11" height="12.5" viewBox="0 0 11 12.5"><path d="M10.3 0.9H1.2L6 6.2L1.2 11.5H10.3" fill="none" stroke="#444746" stroke-width="1.7" stroke-linejoin="miter"/></svg>
<div class="sep" style="left:1232px"></div>
<div class="a" style="left:1242px;top:18.6px;font-size:14px;line-height:16px;color:#1f1f1f;font-weight:bold;letter-spacing:-0.3px">Р<span style="font-size:11.5px">у</span></div>
<svg class="a" style="left:1265px;top:24.6px;overflow:visible" width="7.6" height="3.8"><path d="M0 0H7.6L3.8 3.8Z" fill="#444746"/></svg>
<!-- collapse chevron -->
<svg class="a" style="left:1563.5px;top:23px" width="11" height="7" viewBox="0 0 11 7"><path d="M1 6L5.5 1.5L10 6" fill="none" stroke="#444746" stroke-width="1.6"/></svg>

<!-- formula bar -->
<div class="a" style="left:9.2px;top:57.8px;font-size:11.4px;line-height:14px;color:#1f1f1f;transform:scaleX(0.88);transform-origin:0 0">F21</div>
<svg class="a" style="left:74.8px;top:63px;overflow:visible" width="8.2" height="4.1"><path d="M0 0H8.2L4.1 4.1Z" fill="#444746"/></svg>
<div class="a" style="left:93px;top:58px;width:1px;height:14.8px;background:#c7c7c7"></div>
<svg class="a" style="left:100px;top:54px" width="22" height="22" viewBox="100 54 22 22"><path d="M104.6 70.6Q105.3 72.3 106.8 71.4Q107.6 70.8 108 68.6L109.4 62Q110 59.4 112 60.4" fill="none" stroke="#7d7d7d" stroke-width="1.35" stroke-linecap="round"/><path d="M106.6 63.9H110.8" stroke="#7d7d7d" stroke-width="1.2"/><path d="M110.6 63.8Q111.9 63.2 112.6 64.6L114.9 69.3Q115.6 70.7 117.4 70.1" fill="none" stroke="#7d7d7d" stroke-width="1.4" stroke-linecap="round"/><path d="M117.4 63.9Q116.4 63.4 115.5 64.3L112.6 69.4Q111.9 70.6 110.5 70.2" fill="none" stroke="#7d7d7d" stroke-width="1.2" stroke-linecap="round"/></svg>
<div class="a" style="left:126.8px;top:59px;font-family:'Liberation Mono',monospace;font-size:12.2px;line-height:14px;letter-spacing:-0.54px;color:#333;white-space:nowrap">=TEXTJOIN(" ";ИСТИНА;<span style="color:#f09433">$E$5</span>;<span style="color:#8e44ad">F5</span>)</div>

</body></html>
